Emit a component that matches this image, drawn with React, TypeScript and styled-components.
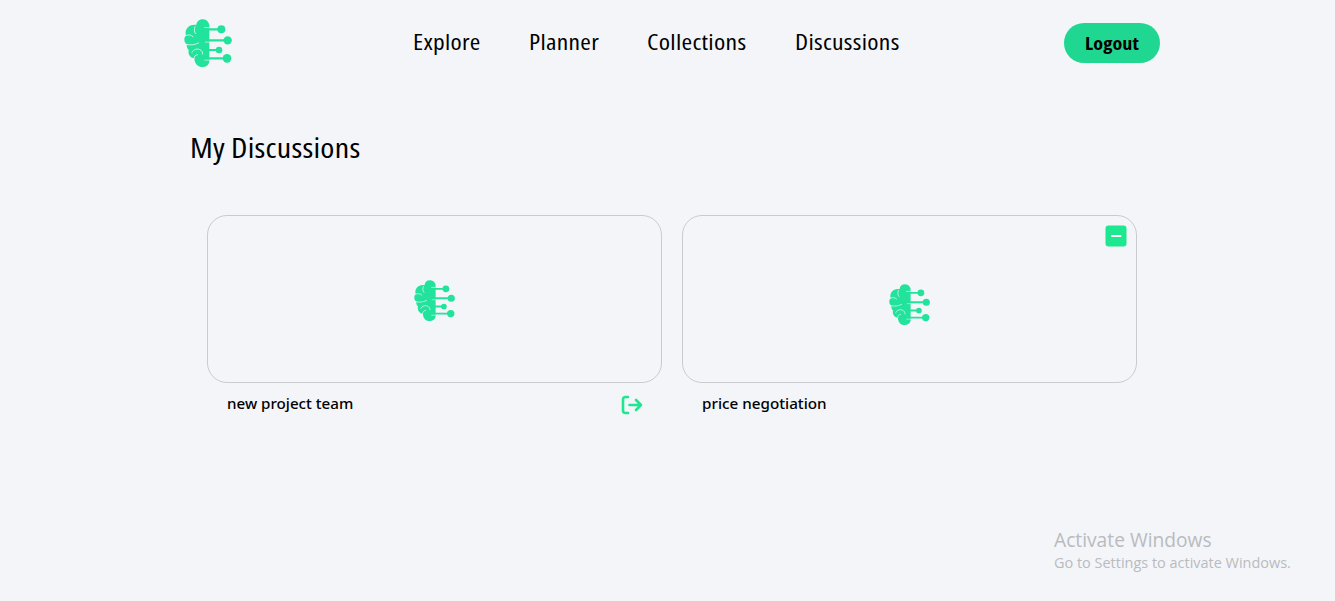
import React from 'react';
import styled, { createGlobalStyle } from 'styled-components';

const GlobalStyle = createGlobalStyle`
  * { box-sizing: border-box; }
  body { margin: 0; background: #f3f5f9; color: #000; }
`;

const condensed = `font-family: "Open Sans", "Noto Sans", sans-serif; font-stretch: 75%;`;

const Page = styled.div`
  position: relative;
  width: 100%;
  height: 601px;
  overflow: hidden;
  background: #f3f5f9;
`;

const Header = styled.header`
  display: flex;
  justify-content: space-between;
  align-items: center;
  height: 86px;
  padding: 0 175px 0 184px;
`;

const Nav = styled.nav`
  display: flex;
  gap: 48px;
  margin: 0 0 4px 16px;
`;

const Fit = styled.span<{ $w: number; $scale: number }>`
  display: block;
  width: ${p => p.$w}px;
  white-space: nowrap;
  transform: scaleX(${p => p.$scale});
  transform-origin: left center;
`;

const NavLink = styled.a`
  ${condensed}
  font-size: 22px;
  line-height: 30px;
  letter-spacing: 0.25px;
`;

const LogoutButton = styled.button`
  ${condensed}
  width: 96px;
  height: 40px;
  padding: 0 0 2px 21px;
  border: 0;
  border-radius: 20px;
  background: #20d792;
  color: #000;
  font-size: 18.5px;
  font-weight: 700;
  letter-spacing: 0.1px;
  text-align: left;
`;

const Main = styled.main`
  padding: 41px 198px 0 190px;
`;

const Title = styled.h1`
  ${condensed}
  margin: 0;
  font-size: 28px;
  line-height: 40px;
  font-weight: 400;
  letter-spacing: 0.2px;
`;

const Grid = styled.section`
  display: grid;
  grid-template-columns: 455px 455px;
  gap: 20px;
  padding: 48px 0 0 17px;
`;

const Preview = styled.div<{ $drop?: number }>`
  position: relative;
  display: flex;
  justify-content: center;
  align-items: center;
  height: 168px;
  padding-top: ${p => p.$drop ?? 0}px;
  border: 1px solid #c9cbcf;
  border-radius: 20px;
`;

const Badge = styled.svg`
  position: absolute;
  top: 9px;
  right: 9px;
`;

const CardFooter = styled.div`
  display: flex;
  justify-content: space-between;
  align-items: flex-start;
  height: 42px;
  padding: 9px 19px 0 20px;
  font: 500 15px/22px "Noto Sans", sans-serif;

  svg { margin-top: 1px; }
`;

const Watermark = styled.aside`
  position: absolute;
  left: 1054px;
  top: 527px;
  color: #b9bbbe;
  font-family: "Open Sans", sans-serif;
  font-size: 14.5px;
  line-height: 20px;
`;

const WatermarkTitle = styled.div`
  font-size: 20px;
  line-height: 26px;
`;

const BrainLogo = ({ size }: { size: number }) => (
  <svg width={size} height={size} viewBox="24 27 144 144" fill="none">
    <path
      fill="#22e39b"
      d="M100 44C97 33 89 28 80 28C69 28 62 35 61 45C50 43 40 47 34 54C28 61 28 70 30 76C23 84 23 97 32 103C32 109 33 116 38 120C36 130 39 142 55 146C57 163 67 171 79 171C91 171 98 165 100 155Z"
    />
    <g stroke="#f3f5f9" strokeWidth="2.4" strokeLinecap="round">
      <path d="M29 77C37 73 45 74 51 80" />
      <path d="M57 50C54 57 54 66 59 71" />
      <path d="M31 103C43 107 57 104 68 99" />
      <path d="M48 127C52 117 66 114 75 121C79 124 80 128 80 132" />
      <path d="M54 146C54 139 58 135 64 134" />
      <path d="M86 53H100M88 96H100M86 150H100" />
    </g>
    <g stroke="#22e39b" strokeWidth="6.5">
      <path d="M84 58H136M85 91H155M90 120H129M84 145H153" />
    </g>
    <g fill="#22e39b">
      <circle cx="136" cy="58" r="12" />
      <circle cx="155" cy="91" r="12.5" />
      <circle cx="129" cy="120" r="10" />
      <circle cx="153" cy="145" r="13" />
    </g>
  </svg>
);

const LeaveIcon = () => (
  <svg width="22" height="22" viewBox="0 -2 22 22" fill="none" stroke="#1de78f" strokeWidth="2.6" strokeLinecap="round" strokeLinejoin="round">
    <path d="M7 2H4.5Q2 2 2 4.5V15.5Q2 18 4.5 18H7M8.500 10H20M15 5L20 10L15 15" />
  </svg>
);

const links = [
  { label: 'Explore', w: 68, scale: 1.155 },
  { label: 'Planner', w: 70, scale: 1.16 },
  { label: 'Collections', w: 100, scale: 1.17 },
  { label: 'Discussions', w: 105, scale: 1.165 },
];

export default function App() {
  return (
    <Page>
      <GlobalStyle />
      <Header>
        <BrainLogo size={48} />
        <Nav>
          {links.map(l => (
            <NavLink key={l.label}><Fit $w={l.w} $scale={l.scale}>{l.label}</Fit></NavLink>
          ))}
        </Nav>
        <LogoutButton><Fit $w={54} $scale={1.085}>Logout</Fit></LogoutButton>
      </Header>
      <Main>
        <Title><Fit $w={171} $scale={1.145}>My Discussions</Fit></Title>
        <Grid>
          <article>
            <Preview $drop={3}><BrainLogo size={41} /></Preview>
            <CardFooter><Fit $w={126} $scale={1.01}>new project team</Fit><LeaveIcon /></CardFooter>
          </article>
          <article>
            <Preview $drop={11}>
              <BrainLogo size={41} />
              <Badge width="22" height="22" viewBox="0 0 22 22">
                <rect x=".5" y=".5" width="21" height="21" rx="3" fill="#1de78f" />
                <path d="M7 11H15.5" stroke="#fff" strokeWidth="2" strokeLinecap="round" />
              </Badge>
            </Preview>
            <CardFooter><Fit $w={124} $scale={1.015}>price negotiation</Fit></CardFooter>
          </article>
        </Grid>
      </Main>
      <Watermark>
        <WatermarkTitle><Fit $w={158} $scale={0.96}>Activate Windows</Fit></WatermarkTitle>
        <Fit $w={237} $scale={0.997}>Go to Settings to activate Windows.</Fit>
      </Watermark>
    </Page>
  );
}
